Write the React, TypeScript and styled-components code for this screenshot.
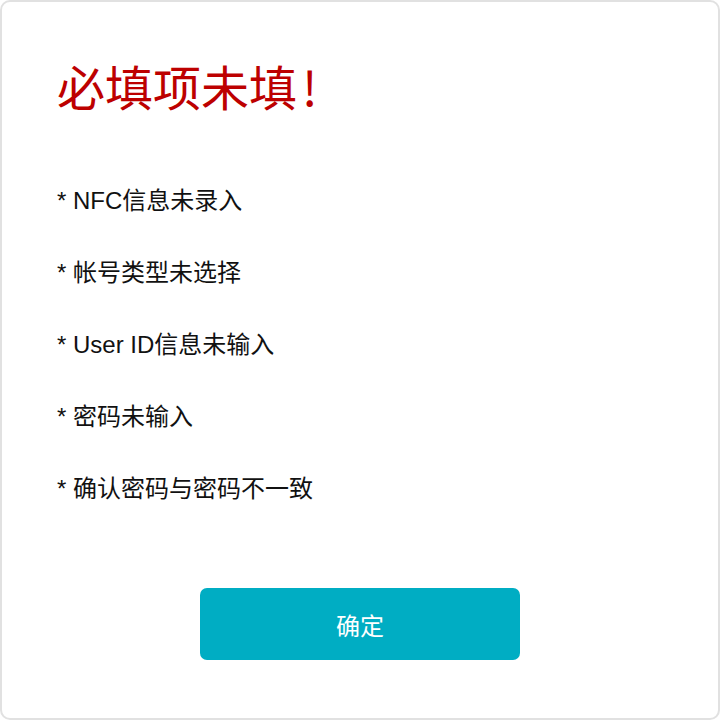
import React from "react";
import styled, { createGlobalStyle } from "styled-components";

const Global = createGlobalStyle`
  html, body { margin: 0; padding: 0; background: #ffffff; }
  * { box-sizing: border-box; }
`;

const FONT = `"Liberation Sans", "Noto Sans CJK SC", sans-serif`;

const Card = styled.div`
  width: 720px;
  height: 720px;
  border: 2px solid #e1e1e1;
  border-radius: 10px;
  background: #ffffff;
  padding: 59px 55px 0;
  display: flex;
  flex-direction: column;
  font-family: ${FONT};
`;

const Title = styled.h1`
  margin: 0;
  font-family: "Noto Sans CJK SC", sans-serif;
  font-size: 48px;
  line-height: 48px;
  font-weight: 400;
  color: #bd0000;
`;

const Mark = styled.span`
  margin-left: 5px;
`;

const List = styled.ul`
  list-style: none;
  margin: 56px 0 0;
  padding: 0;
  display: flex;
  flex-direction: column;
`;

const Item = styled.li`
  font-size: 24px;
  line-height: 72px;
  color: #111111;
`;

const Footer = styled.div`
  margin-top: 63px;
  display: flex;
  justify-content: center;
`;

const Button = styled.button`
  width: 320px;
  height: 72px;
  border: none;
  border-radius: 7px;
  background: #00adc3;
  color: #ffffff;
  font-family: ${FONT};
  font-size: 24px;
  cursor: pointer;
`;

const items = [
  "NFC信息未录入",
  "帐号类型未选择",
  "User ID信息未输入",
  "密码未输入",
  "确认密码与密码不一致",
];

export default function App() {
  return (
    <>
      <Global />
      <Card>
        <Title>
          必填项未填<Mark>!</Mark>
        </Title>
        <List>
          {items.map((t) => (
            <Item key={t}>* {t}</Item>
          ))}
        </List>
        <Footer>
          <Button>确定</Button>
        </Footer>
      </Card>
    </>
  );
}
